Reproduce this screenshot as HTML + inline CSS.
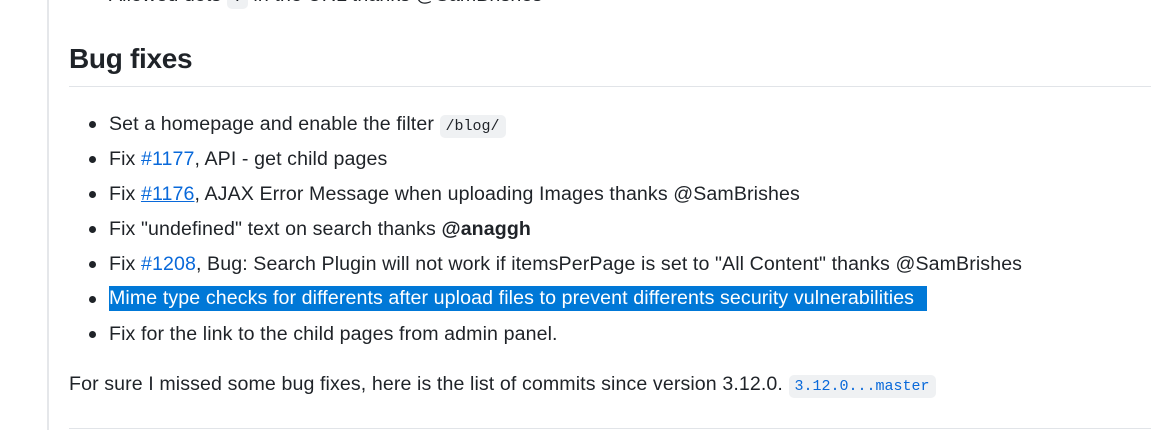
<!DOCTYPE html>
<html><head><style>
body{margin:0;width:1151px;height:430px;overflow:hidden;background:#fff;font-family:"Liberation Sans",sans-serif;color:#1f2328;position:relative}
.bar{position:absolute;left:47px;top:0;width:2px;height:430px;background:#e5e7ea}
.t{position:absolute;white-space:nowrap;font-size:19.6px;letter-spacing:0.1px;line-height:24px}
h2{position:absolute;left:69px;top:40px;margin:0;font-size:28px;font-weight:600;line-height:38px;letter-spacing:-0.3px}
.rule{position:absolute;left:69px;right:0;height:1px;background:#e1e4e8}
code{font-family:"Liberation Mono",monospace;font-size:15px;letter-spacing:0;background:#eff1f3;border-radius:5px;padding:3px 6px}
a{color:#0969da;text-decoration:none}
.dot{position:absolute;left:89px;width:7px;height:7px;border-radius:50%;background:#1f2328}
.hl{background:#0078d7;color:#fff}
</style></head><body>
<div class="bar"></div>
<div class="t" style="left:109px;top:-17px">Allowed dots <code>.</code> in the URL thanks @SamBrishes</div>
<h2>Bug fixes</h2>
<div class="rule" style="top:86px"></div>
<div class="dot" style="top:121px"></div><div class="t" style="left:109px;top:112px">Set a homepage and enable the filter <code>/blog/</code></div>
<div class="dot" style="top:156px"></div><div class="t" style="left:109px;top:147px">Fix <a>#1177</a>, API - get child pages</div>
<div class="dot" style="top:191px"></div><div class="t" style="left:109px;top:182px">Fix <a style="text-decoration:underline">#1176</a>, AJAX Error Message when uploading Images thanks @SamBrishes</div>
<div class="dot" style="top:226px"></div><div class="t" style="left:109px;top:217px">Fix "undefined" text on search thanks <b>@anaggh</b></div>
<div class="dot" style="top:261px"></div><div class="t" style="left:109px;top:252px">Fix <a>#1208</a>, Bug: Search Plugin will not work if itemsPerPage is set to "All Content" thanks @SamBrishes</div>
<div class="dot" style="top:296px"></div><div class="t hl" style="left:109px;top:286px;height:25px;width:818px;overflow:hidden">Mime type checks for differents after upload files to prevent differents security vulnerabilities</div>
<div class="dot" style="top:331px"></div><div class="t" style="left:109px;top:322px">Fix for the link to the child pages from admin panel.</div>
<div class="t" style="left:69px;top:372px">For sure I missed some bug fixes, here is the list of commits since version 3.12.0. <code style="color:#0969da">3.12.0...master</code></div>
<div class="rule" style="top:428px"></div>
</body></html>
